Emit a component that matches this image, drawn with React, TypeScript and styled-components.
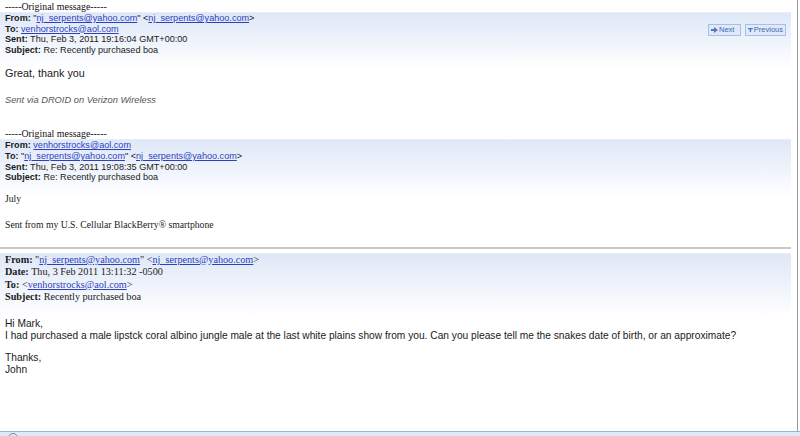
import styled, { createGlobalStyle } from "styled-components"

const Global = createGlobalStyle`
 html, body {
  margin: 0;
  padding: 0;
  background: #fff;
 }
`

type Field = { label: string; value: React.ReactNode }

const Mail = (props: { href: string; children?: React.ReactNode }) => (
 <Link href={`mailto:${props.href}`}>{props.children ?? props.href}</Link>
)

const first: Field[] = [
 { label: "From:", value: <>"<Mail href="nj_serpents@yahoo.com" />" &lt;<Mail href="nj_serpents@yahoo.com" />&gt;</> },
 { label: "To:", value: <Mail href="venhorstrocks@aol.com" /> },
 { label: "Sent:", value: "Thu, Feb 3, 2011 19:16:04 GMT+00:00" },
 { label: "Subject:", value: "Re: Recently purchased boa" }
]

const second: Field[] = [
 { label: "From:", value: <Mail href="venhorstrocks@aol.com" /> },
 { label: "To:", value: <>"<Mail href="nj_serpents@yahoo.com" />" &lt;<Mail href="nj_serpents@yahoo.com" />&gt;</> },
 { label: "Sent:", value: "Thu, Feb 3, 2011 19:08:35 GMT+00:00" },
 { label: "Subject:", value: "Re: Recently purchased boa" }
]

const third: Field[] = [
 { label: "From:", value: <>"<Mail href="nj_serpents@yahoo.com" />" &lt;<Mail href="nj_serpents@yahoo.com" />&gt;</> },
 { label: "Date:", value: "Thu, 3 Feb 2011 13:11:32 -0500" },
 { label: "To:", value: <>&lt;<Mail href="venhorstrocks@aol.com" />&gt;</> },
 { label: "Subject:", value: "Recently purchased boa" }
]

const NextIcon = () => (
 <svg width="7" height="6" viewBox="0 0 7 6">
  <path d="M0 2h3V0l4 3-4 3V4H0z" fill="#4f78c0" />
 </svg>
)

const PrevIcon = () => (
 <svg width="7" height="6" viewBox="0 0 7 6">
  <path d="M0 0h7v2H4.5v4h-2V2H0z" fill="#4f78c0" />
 </svg>
)

const Headers = ({ fields, serif }: { fields: Field[]; serif?: boolean }) => (
 <>
  {fields.map((f, i) => (
   <HeaderLine key={i} $serif={serif}>
    <b>{f.label}</b> {f.value}
   </HeaderLine>
  ))}
 </>
)

const App = () => (
 <Page>
  <Global />
  <Main>
   <Content>
    <Original $top={1}>-----Original message-----</Original>
    <HeaderBox>
     <div>
      <Headers fields={first} />
     </div>
     <Nav>
      <NavButton $w={33}><NextIcon />Next</NavButton>
      <NavButton $w={41}><PrevIcon />Previous</NavButton>
     </Nav>
    </HeaderBox>
    <Body $top={12}>Great, thank you</Body>
    <Signature>Sent via DROID on Verizon Wireless</Signature>

    <Original $top={22}>-----Original message-----</Original>
    <HeaderBox>
     <div>
      <Headers fields={second} />
     </div>
    </HeaderBox>
    <SerifBody $top={9}>July</SerifBody>
    <SerifBody $top={13}>Sent from my U.S. Cellular BlackBerry® smartphone</SerifBody>

    <Rule />
    <HeaderBox $serif>
     <div>
      <Headers fields={third} serif />
     </div>
    </HeaderBox>
    <Body $top={15} $narrow>
     Hi Mark,<br />
     I had purchased a male lipstck coral albino jungle male at the last white plains show from you. Can you please tell me the snakes date of birth, or an approximate?
    </Body>
    <Body $top={10} $narrow>
     Thanks,<br />
     John
    </Body>
   </Content>
   <Gutter />
  </Main>
  <StatusBar>
   <StatusIcon />
  </StatusBar>
 </Page>
)

export default App

const Page = styled.div`
 display: flex;
 flex-direction: column;
 width: 800px;
 height: 436px;
 overflow: hidden;
`

const Main = styled.div`
 display: flex;
 flex: 1;
 min-height: 0;
`

const Content = styled.div`
 width: 791px;
 color: #1a1a1a;
`

const Gutter = styled.div`
 flex: 1;
 margin-left: 6px;
 border-left: 1px solid #9a9a9a;
 background: #fff;
`

const Original = styled.div<{ $top: number }>`
 margin-top: ${p => p.$top}px;
 padding-left: 5px;
 font-family: "Liberation Serif", "Times New Roman", serif;
 font-size: 9.9px;
 line-height: 11px;
 color: #111;
`

const HeaderBox = styled.div<{ $serif?: boolean }>`
 display: flex;
 justify-content: space-between;
 align-items: flex-start;
 padding: 0 5px 14px;
 margin-bottom: -14px;
 background: linear-gradient(#dfe8f8 0%, #edf2fb 45%, #fff 100%);
 border-top: 1px solid #e8eef8;
`

const HeaderLine = styled.div<{ $serif?: boolean }>`
 font-family: ${p => (p.$serif ? `"Liberation Serif", "Times New Roman", serif` : `"Liberation Sans", Arial, sans-serif`)};
 font-size: ${p => (p.$serif ? "10.2px" : "9.1px")};
 line-height: ${p => (p.$serif ? "12.4px" : "10.6px")};
 color: #1a1a1a;
 white-space: nowrap;
`

const Link = styled.a`
 color: #2c3fc0;
 text-decoration: underline;
`

const Nav = styled.div`
 display: flex;
 gap: 4px;
 margin-top: 11px;
`

const NavButton = styled.button<{ $w: number }>`
 display: inline-flex;
 align-items: center;
 gap: 1px;
 width: ${p => p.$w}px;
 height: 12px;
 padding: 0 2px;
 border: 1px solid #a8c0e4;
 background: #dfe9f9;
 color: #4068b0;
 font-family: "Liberation Sans", Arial, sans-serif;
 font-size: 7.5px;
 line-height: 10px;
 cursor: pointer;
`

const Body = styled.div<{ $top: number; $narrow?: boolean }>`
 margin-top: ${p => p.$top}px;
 padding-left: 5px;
 font-family: "Liberation Sans", Arial, sans-serif;
 font-size: ${p => (p.$narrow ? "10.2px" : "10.8px")};
 line-height: 12px;
 color: #1a1a1a;
`

const Signature = styled.div`
 margin-top: 15px;
 padding-left: 5px;
 font-family: "Liberation Sans", Arial, sans-serif;
 font-style: italic;
 font-size: 9.3px;
 line-height: 12px;
 color: #555;
`

const SerifBody = styled.div<{ $top: number }>`
 margin-top: ${p => p.$top}px;
 padding-left: 5px;
 font-family: "Liberation Serif", "Times New Roman", serif;
 font-size: 9.7px;
 line-height: 13px;
 color: #1a1a1a;
`

const Rule = styled.hr`
 margin: 16px 0 4px;
 border: 0;
 border-top: 2px solid #c8c8c8;
 width: 791px;
`

const StatusBar = styled.div`
 height: 4px;
 border-top: 1px solid #98b4dc;
 background: #dde9f8;
 padding-left: 8px;
`

const StatusIcon = styled.span`
 display: block;
 width: 8px;
 height: 8px;
 margin-top: 1px;
 border: 1px solid #7a8aa0;
 border-radius: 50%;
`
